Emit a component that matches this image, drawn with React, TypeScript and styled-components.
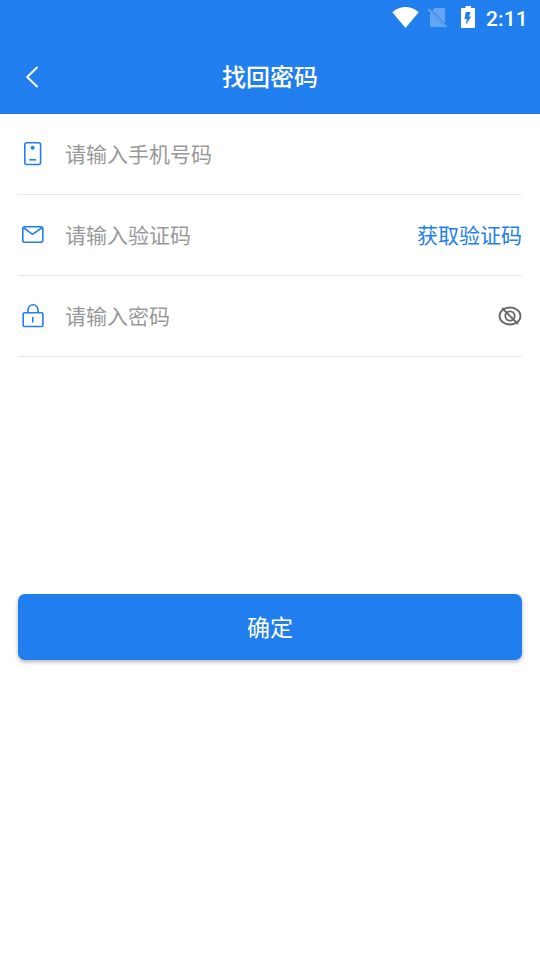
import React from 'react';
import styled, { createGlobalStyle } from 'styled-components';

const Global = createGlobalStyle`
  * { box-sizing: border-box; }
  body { margin: 0; background: #fff; font-family: Roboto, "Noto Sans CJK SC", sans-serif; }
`;
const Screen = styled.main`display: flex; flex-direction: column; height: 960px; width: 540px;`;
const StatusBar = styled.div`
  height: 36px; background: #217eee; color: #fff; display: flex; align-items: center;
  justify-content: flex-end; padding-right: 12px;
`;
const StatusIcons = styled.svg`width: 90px; height: 36px; display: block; margin-right: 6px;`;
const Clock = styled.span`width: 42px; white-space: nowrap; font-size: 21px; font-weight: 500; line-height: 36px; padding-top: 2px; letter-spacing: 0.1px;`;
const Header = styled.header`
  height: 78px; background: #217eee; color: #fff; display: grid;
  grid-template-columns: 64px 1fr 64px; align-items: center;
`;
const Back = styled.button`border: 0; background: none; padding: 0; width: 64px; height: 78px; svg { display: block; }`;
const Title = styled.h1`margin: 0; padding-top: 6px; text-align: center; font-size: 24px; font-weight: 500; line-height: 72px;`;
const Form = styled.form`padding: 0 18px; display: flex; flex-direction: column;`;
const Row = styled.label`height: 81px; display: flex; align-items: center; border-bottom: 1px solid #e8e8e8;`;
const FieldIcon = styled.svg`width: 30px; height: 30px; margin-right: 17px; fill: none; stroke: #217eee; stroke-width: 1.6;`;
const Input = styled.input`
  flex: 1; min-width: 0; border: 0; outline: 0; padding: 2px 0 0; height: 60px; background: none;
  font: 400 21px Roboto, "Noto Sans CJK SC", sans-serif;
  &::placeholder { color: #999; opacity: 1; }
`;
const CodeButton = styled.button`border: 0; background: none; padding: 0 0 2px; color: #217eee; font: 400 21px Roboto, "Noto Sans CJK SC", sans-serif;`;
const Eye = styled.svg`width: 24px; height: 24px; fill: none; stroke: #666; stroke-width: 1.8;`;
const Submit = styled.button`
  margin-top: 237px; height: 66px; padding: 0 0 2px; border: 0; border-radius: 7px; background: #217eee; color: #fff;
  font: 400 23px Roboto, "Noto Sans CJK SC", sans-serif; box-shadow: 0 2px 4px rgba(0,0,0,.3);
`;

export default function App() {
  return (
    <Screen>
      <Global />
      <StatusBar>
        <StatusIcons viewBox="390 0 90 36">
          <path d="M392.300 12.200Q405.500 2 418.700 12.200L405.500 28Z" fill="#fff" />
          <g fill="#64a5f3">
            <path d="M434.500 8H443.500Q445 8 445 9.500V23.500L432 10.500Z" />
            <path d="M430 12.500L444.500 27H431.500Q430 27 430 25.500Z" />
            <path d="M428.300 9.200L446.500 27.400" stroke="#64a5f3" strokeWidth="2" />
          </g>
          <path d="M461.700 8H465.500V6H471V8H474.300Q475 8 475 8.700V27.300Q475 28 474.300 28H461.700Q461 28 461 27.300V8.700Q461 8 461.700 8Z" fill="#fff" />
          <path d="M465.800 12H470.700L468.800 16.500H471.200L465.800 25L466.800 19H464.500Z" fill="#217eee" />
        </StatusIcons>
        <Clock>2:11</Clock>
      </StatusBar>
      <Header>
        <Back type="button" aria-label="返回"><svg width="64" height="78" viewBox="0 36 64 78"><path d="M37 67.500L27.200 77L37 86.500" fill="none" stroke="#fff" strokeWidth="2" strokeLinecap="round" strokeLinejoin="round" /></svg></Back>
        <Title>找回密码</Title>
      </Header>
      <Form>
        <Row>
          <FieldIcon viewBox="18 139 30 30"><rect x="24.800" y="142.800" width="15.800" height="21.700" rx="2" /><circle cx="32.600" cy="147.700" r="2" fill="#217eee" stroke="none" /><path d="M29.300 159.800H36" /></FieldIcon>
          <Input type="tel" placeholder="请输入手机号码" />
        </Row>
        <Row>
          <FieldIcon viewBox="18 220 30 30"><rect x="22.800" y="226.800" width="20" height="15.500" rx="2" /><path d="M23.300 227.500L32.500 234.300L42.300 227.500" /></FieldIcon>
          <Input placeholder="请输入验证码" /><CodeButton type="button">获取验证码</CodeButton>
        </Row>
        <Row>
          <FieldIcon viewBox="18 301 30 30"><rect x="23.200" y="312.800" width="19.700" height="13.700" rx="1.200" /><path d="M28 312.500V309.800a5 5 0 0 1 10 0V312.500M32.800 317V322.500" /></FieldIcon>
          <Input type="password" placeholder="请输入密码" />
          <Eye viewBox="498 304 24 24"><ellipse cx="510" cy="316" rx="10.500" ry="8.500" /><circle cx="510" cy="316" r="4.700" /><path d="M502 308L518 324" /></Eye>
        </Row>
        <Submit type="button">确定</Submit>
      </Form>
    </Screen>
  );
}
